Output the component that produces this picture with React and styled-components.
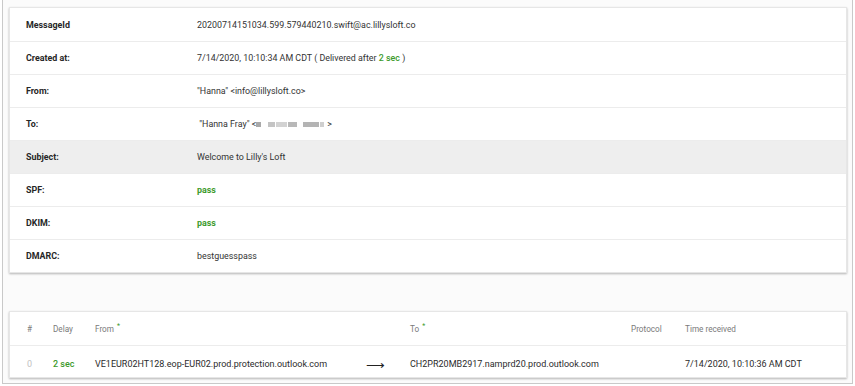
import React from "react"
import styled, { createGlobalStyle } from "styled-components"

const GlobalStyle = createGlobalStyle`
  html, body {
    margin: 0;
    padding: 0;
    background: #ffffff;
  }
  body {
    font-family: Roboto, "Liberation Sans", sans-serif;
    -webkit-font-smoothing: antialiased;
  }
`

const Window = styled.div`
  box-sizing: border-box;
  width: 851px;
  height: 384px;
  margin-left: 2px;
  padding: 7px 5px 0 6px;
  background: #fbfbfb;
  border: 1px solid #c9c9c9;
  border-top: none;
  display: flex;
  flex-direction: column;
  gap: 38px;
`

const Card = styled.div`
  background: #ffffff;
  border: 1px solid #e6e6e6;
  box-shadow: 0 1px 2px rgba(0, 0, 0, 0.28);
`

const Row = styled.div`
  display: grid;
  grid-template-columns: 171px 1fr;
  align-items: center;
  height: 33px;
  box-sizing: border-box;
  padding-left: 16px;
  font-size: 8.9px;
  background: ${({ shaded }) => (shaded ? "#eeeeee" : "#ffffff")};
  border-top: ${({ first }) => (first ? "none" : "1px solid #ececec")};
`

const Label = styled.div`
  font-weight: 700;
  color: #262626;
`

const Value = styled.div`
  color: #333333;
  display: flex;
  align-items: center;
`

const Green = styled.span`
  color: #3c9a2b;
  font-weight: ${({ bold }) => (bold ? 700 : 500)};
  white-space: pre;
`

const Blur = styled.span`
  display: inline-block;
  width: ${({ w }) => w}px;
  height: 5px;
  margin-right: ${({ gap }) => gap || 1}px;
  background: ${({ tone }) => tone || "#c4c4c4"};
  filter: blur(0.6px);
`

const HopGrid = styled.div`
  display: grid;
  grid-template-columns: 26px 42px 270px 45px 221px 54px 1fr;
  align-items: center;
  padding-left: 17px;
  box-sizing: border-box;
  height: ${({ head }) => (head ? "33px" : "32px")};
  padding-top: ${({ head }) => (head ? "0" : "5px")};
  border-top: ${({ head }) => (head ? "none" : "1px solid #ececec")};
  font-size: ${({ head }) => (head ? "8.2px" : "9px")};
  color: ${({ head }) => (head ? "#7a7a7a" : "#2b2b2b")};
`

const HeadCell = styled.div`
  white-space: nowrap;
`

const Star = styled.sup`
  color: #3c9a2b;
  font-size: 7px;
  margin-left: 3px;
  vertical-align: 4px;
  line-height: 0;
`

const Cell = styled.div`
  white-space: nowrap;
  color: ${({ tone }) => tone || "inherit"};
  font-weight: ${({ bold }) => (bold ? 500 : 400)};
`

const Arrow = styled.div`
  font-size: 13px;
  color: #222;
  padding-top: 2px;
  padding-left: 1px;
`

const rows = [
  { label: "MessageId", value: "20200714151034.599.579440210.swift@ac.lillysloft.co" },
  {
    label: "Created at:",
    value: (
      <>
        7/14/2020, 10:10:34 AM CDT ( Delivered after&nbsp;<Green>2 sec</Green>&nbsp;)
      </>
    ),
  },
  { label: "From:", value: "\"Hanna\" <info@lillysloft.co>" },
  {
    label: "To:",
    value: (
      <>
        &nbsp;"Hanna Fray" &lt;
        <Blur w={5} gap={7} tone="#a9a9a9" />
        <Blur w={7} gap={1} />
        <Blur w={11} gap={1} tone="#d2d2d2" />
        <Blur w={9} gap={6} tone="#b8b8b8" />
        <Blur w={16} gap={1} tone="#b4b4b4" />
        <Blur w={4} gap={3} tone="#cfcfcf" />
        &gt;
      </>
    ),
  },
  { label: "Subject:", value: "Welcome to Lilly's Loft", shaded: true },
  { label: "SPF:", value: <Green bold>pass</Green> },
  { label: "DKIM:", value: <Green bold>pass</Green> },
  { label: "DMARC:", value: "bestguesspass" },
]

export default function App() {
  return (
    <>
      <GlobalStyle />
      <Window>
        <Card>
          {rows.map((r, i) => (
            <Row key={r.label} first={i === 0} shaded={r.shaded}>
              <Label>{r.label}</Label>
              <Value>{r.value}</Value>
            </Row>
          ))}
        </Card>
        <Card>
          <HopGrid head>
            <HeadCell>#</HeadCell>
            <HeadCell>Delay</HeadCell>
            <HeadCell>
              From<Star>*</Star>
            </HeadCell>
            <HeadCell />
            <HeadCell>
              To<Star>*</Star>
            </HeadCell>
            <HeadCell>Protocol</HeadCell>
            <HeadCell>Time received</HeadCell>
          </HopGrid>
          <HopGrid>
            <Cell tone="#c2c2c2">0</Cell>
            <Cell tone="#3c9a2b" bold>2 sec</Cell>
            <Cell>VE1EUR02HT128.eop-EUR02.prod.protection.outlook.com</Cell>
            <Arrow>⟶</Arrow>
            <Cell>CH2PR20MB2917.namprd20.prod.outlook.com</Cell>
            <Cell />
            <Cell>7/14/2020, 10:10:36 AM CDT</Cell>
          </HopGrid>
        </Card>
      </Window>
    </>
  )
}
